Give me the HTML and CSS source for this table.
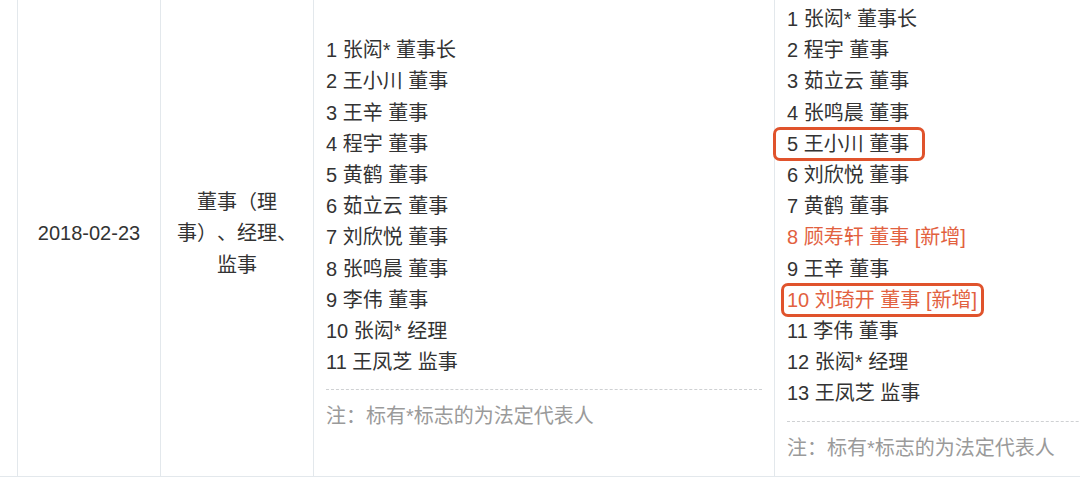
FILE: index.html
```html
<!DOCTYPE html>
<html lang="zh-CN">
<head>
    <meta charset="UTF-8">
    <meta name="viewport" content="width=device-width, initial-scale=1.0">
    <title>主要人员变更</title>
    <link rel="stylesheet" href="styles.css">
</head>
<body>
    <table class="change-table">
        <tr>
            <td class="col-index"></td>
            <td class="col-date">2018-02-23</td>
            <td class="col-item">董事（理事）、经理、监事</td>
            <td class="col-list">
                <div class="line">1 张闳* 董事长</div>
                <div class="line">2 王小川 董事</div>
                <div class="line">3 王辛 董事</div>
                <div class="line">4 程宇 董事</div>
                <div class="line">5 黄鹤 董事</div>
                <div class="line">6 茹立云 董事</div>
                <div class="line">7 刘欣悦 董事</div>
                <div class="line">8 张鸣晨 董事</div>
                <div class="line">9 李伟 董事</div>
                <div class="line">10 张闳* 经理</div>
                <div class="line">11 王凤芝 监事</div>
                <div class="note">注：标有*标志的为法定代表人</div>
            </td>
            <td class="col-list">
                <div class="line">1 张闳* 董事长</div>
                <div class="line">2 程宇 董事</div>
                <div class="line">3 茹立云 董事</div>
                <div class="line">4 张鸣晨 董事</div>
                <div class="line"><span class="mark mark-wide">5 王小川 董事</span></div>
                <div class="line">6 刘欣悦 董事</div>
                <div class="line">7 黄鹤 董事</div>
                <div class="line added">8 顾寿轩 董事 [新增]</div>
                <div class="line">9 王辛 董事</div>
                <div class="line added"><span class="mark mark-tight">10 刘琦开 董事 [新增]</span></div>
                <div class="line">11 李伟 董事</div>
                <div class="line">12 张闳* 经理</div>
                <div class="line">13 王凤芝 监事</div>
                <div class="note">注：标有*标志的为法定代表人</div>
            </td>
        </tr>
    </table>
</body>
</html>
```

FILE: styles.css
```css
html, body {
    overflow: hidden;
}
body {
    margin: 0;
    background: #ffffff;
    font-family: 'Liberation Sans', 'Noto Sans CJK SC', sans-serif;
    font-size: 20px;
    color: #333333;
    text-spacing-trim: space-all; /* keep full-width punctuation */
}
.change-table {
    border-collapse: collapse;
    table-layout: fixed;
    width: 1235px;
    margin-top: -9px;
}
.change-table td {
    border: 1px solid #e3e8ec;
    padding: 12px;
    vertical-align: middle;
    line-height: 31.2px;
}
.col-index {
    width: 17px;
    padding: 0 !important;
    border-left: none !important;
}
.col-date {
    width: 118px; /* 143 incl. padding */
    text-align: center;
}
.col-item {
    width: 132px; /* 153 incl. padding */
    text-align: center;
    padding: 12px 10px !important;
}
.col-list {
    width: 436px; /* 461 incl. padding */
}
.line {
    white-space: nowrap;
}
.added {
    color: #e2613f; /* newly added members */
}
.note {
    margin-top: 11px;
    padding-top: 11px;
    border-top: 1px dashed #cfd1d3;
    color: #9a9a9a;
    white-space: nowrap;
}
/* annotation boxes drawn over the rows */
.mark {
    border: 3px solid #e0532c;
    border-radius: 7px;
    padding-top: 3px;
    padding-bottom: 3px;
}
.mark-wide {
    padding-left: 11px;
    padding-right: 13px;
    margin-left: -14px;
    margin-right: -16px;
}
.mark-tight {
    padding-left: 3px;
    padding-right: 4px;
    margin-left: -6px;
    margin-right: -7px;
}
```
